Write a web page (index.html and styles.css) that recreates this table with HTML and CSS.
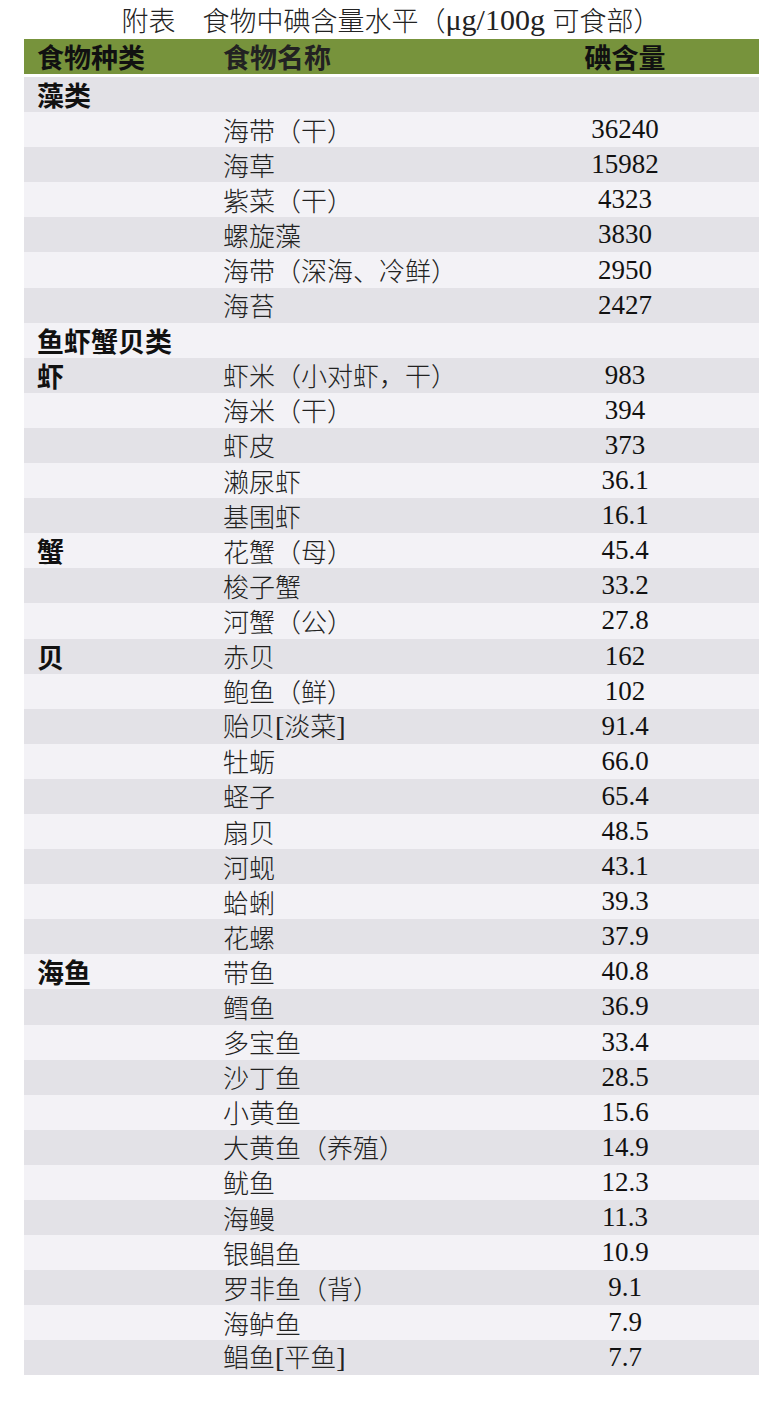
FILE: index.html
```html
<!DOCTYPE html>
<html lang="zh">
<head>
<meta charset="utf-8">
<title>食物中碘含量水平</title>
<link rel="stylesheet" href="styles.css">
</head>
<body>
<div class="page">
  <h1 class="title">附表　食物中碘含量水平（<span class="lat">μg/100g </span>可食部）</h1>
  <div class="table">
    <div class="head">
      <div class="c1">食物种类</div><div class="c2">食物名称</div><div class="c3">碘含量</div>
    </div>
    <div class="body">
      <div class="row"><div class="c1">藻类</div><div class="c2"></div><div class="c3"></div></div>
      <div class="row"><div class="c1"></div><div class="c2">海带（干）</div><div class="c3">36240</div></div>
      <div class="row"><div class="c1"></div><div class="c2">海草</div><div class="c3">15982</div></div>
      <div class="row"><div class="c1"></div><div class="c2">紫菜（干）</div><div class="c3">4323</div></div>
      <div class="row"><div class="c1"></div><div class="c2">螺旋藻</div><div class="c3">3830</div></div>
      <div class="row"><div class="c1"></div><div class="c2">海带（深海、冷鲜）</div><div class="c3">2950</div></div>
      <div class="row"><div class="c1"></div><div class="c2">海苔</div><div class="c3">2427</div></div>
      <div class="row"><div class="c1">鱼虾蟹贝类</div><div class="c2"></div><div class="c3"></div></div>
      <div class="row"><div class="c1">虾</div><div class="c2">虾米（小对虾，干）</div><div class="c3">983</div></div>
      <div class="row"><div class="c1"></div><div class="c2">海米（干）</div><div class="c3">394</div></div>
      <div class="row"><div class="c1"></div><div class="c2">虾皮</div><div class="c3">373</div></div>
      <div class="row"><div class="c1"></div><div class="c2">濑尿虾</div><div class="c3">36.1</div></div>
      <div class="row"><div class="c1"></div><div class="c2">基围虾</div><div class="c3">16.1</div></div>
      <div class="row"><div class="c1">蟹</div><div class="c2">花蟹（母）</div><div class="c3">45.4</div></div>
      <div class="row"><div class="c1"></div><div class="c2">梭子蟹</div><div class="c3">33.2</div></div>
      <div class="row"><div class="c1"></div><div class="c2">河蟹（公）</div><div class="c3">27.8</div></div>
      <div class="row"><div class="c1">贝</div><div class="c2">赤贝</div><div class="c3">162</div></div>
      <div class="row"><div class="c1"></div><div class="c2">鲍鱼（鲜）</div><div class="c3">102</div></div>
      <div class="row"><div class="c1"></div><div class="c2">贻贝<span class="lat">[</span>淡菜<span class="lat">]</span></div><div class="c3">91.4</div></div>
      <div class="row"><div class="c1"></div><div class="c2">牡蛎</div><div class="c3">66.0</div></div>
      <div class="row"><div class="c1"></div><div class="c2">蛏子</div><div class="c3">65.4</div></div>
      <div class="row"><div class="c1"></div><div class="c2">扇贝</div><div class="c3">48.5</div></div>
      <div class="row"><div class="c1"></div><div class="c2">河蚬</div><div class="c3">43.1</div></div>
      <div class="row"><div class="c1"></div><div class="c2">蛤蜊</div><div class="c3">39.3</div></div>
      <div class="row"><div class="c1"></div><div class="c2">花螺</div><div class="c3">37.9</div></div>
      <div class="row"><div class="c1">海鱼</div><div class="c2">带鱼</div><div class="c3">40.8</div></div>
      <div class="row"><div class="c1"></div><div class="c2">鳕鱼</div><div class="c3">36.9</div></div>
      <div class="row"><div class="c1"></div><div class="c2">多宝鱼</div><div class="c3">33.4</div></div>
      <div class="row"><div class="c1"></div><div class="c2">沙丁鱼</div><div class="c3">28.5</div></div>
      <div class="row"><div class="c1"></div><div class="c2">小黄鱼</div><div class="c3">15.6</div></div>
      <div class="row"><div class="c1"></div><div class="c2">大黄鱼（养殖）</div><div class="c3">14.9</div></div>
      <div class="row"><div class="c1"></div><div class="c2">鱿鱼</div><div class="c3">12.3</div></div>
      <div class="row"><div class="c1"></div><div class="c2">海鳗</div><div class="c3">11.3</div></div>
      <div class="row"><div class="c1"></div><div class="c2">银鲳鱼</div><div class="c3">10.9</div></div>
      <div class="row"><div class="c1"></div><div class="c2">罗非鱼（背）</div><div class="c3">9.1</div></div>
      <div class="row"><div class="c1"></div><div class="c2">海鲈鱼</div><div class="c3">7.9</div></div>
      <div class="row"><div class="c1"></div><div class="c2">鲳鱼<span class="lat">[</span>平鱼<span class="lat">]</span></div><div class="c3">7.7</div></div>
    </div>
  </div>
</div>
</body>
</html>
```

FILE: styles.css
```css
html, body {
  margin: 0;
  padding: 0;
  background: #ffffff;
}

.page {
  width: 782px;
  min-height: 1409px;
  font-family: "Liberation Serif", "Noto Sans CJK SC", serif;
  color: #1a1a1a;
}

.title {
  margin: 0;
  height: 39px;
  display: flex;
  align-items: center;
  justify-content: center;
  font-family: "Noto Sans CJK SC", sans-serif;
  font-size: 27px;
  font-weight: 300;
  line-height: 1;
  color: #222;
  white-space: pre;
}

.title .lat {
  font-family: "Liberation Serif", serif;
  font-weight: 400;
  font-size: 30px;
}

.table {
  margin-left: 24px;
  width: 735px;
}

.head,
.row {
  display: grid;
  grid-template-columns: 199px 302px 200px 1fr;
  align-items: center;
}

.head {
  height: 35px;
  background: #77933c;
  font-family: "Noto Sans CJK SC", sans-serif;
  font-weight: 700;
  font-size: 27px;
  color: #111;
  margin-bottom: 3px;
}

.row {
  height: 35.1px;
  font-size: 26px;
  font-weight: 300;
}

.body .row:nth-child(odd) {
  background: #e3e2e7;
}

.body .row:nth-child(even) {
  background: #f3f2f6;
}

.c1 {
  padding-left: 13px;
  line-height: 1;
}

.row .c1 {
  font-family: "Noto Sans CJK SC", sans-serif;
  font-weight: 700;
  font-size: 27px;
  color: #111;
}

.c2 {
  line-height: 1;
  font-family: "Noto Sans CJK SC", sans-serif;
  color: #222;
}

.c2 .lat {
  font-family: "Liberation Serif", serif;
  font-weight: 400;
  font-size: 28px;
}

.c3 {
  text-align: center;
  line-height: 1;
}

.row .c3 {
  font-family: "Liberation Serif", serif;
  font-weight: 400;
  font-size: 27px;
  color: #111;
}
```
